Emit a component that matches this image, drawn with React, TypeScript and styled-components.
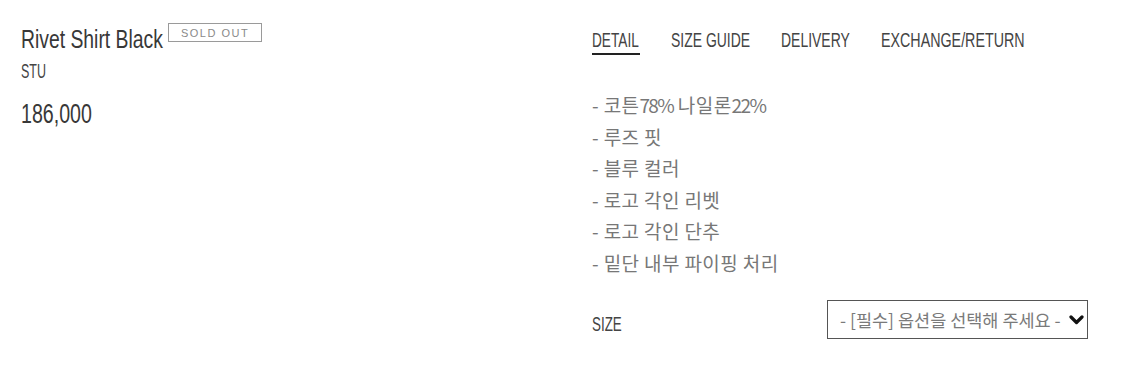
import React from "react";
import styled, { createGlobalStyle } from "styled-components";

const GlobalStyle = createGlobalStyle`
  html, body { margin: 0; padding: 0; background: #fff; }
  body { font-family: "Liberation Sans", "Noto Sans CJK KR", sans-serif; }
`;

const LATIN = `"Liberation Sans", Arial, sans-serif`;
const KOREAN = `"Noto Sans CJK KR", sans-serif`;

/* Condensed text: the reference uses a narrow display face; we squeeze Liberation Sans. */
const Squeeze = styled.span<{ $s: number }>`
  display: inline-block;
  white-space: nowrap;
  transform: scaleX(${(p) => p.$s});
  transform-origin: 0 50%;
`;

const Page = styled.div`
  display: grid;
  grid-template-columns: 592px 1fr;
  width: 1125px;
  height: 365px;
  box-sizing: border-box;
  padding-top: 24px;
`;

const Left = styled.div`
  padding-left: 21px;
`;

const TitleRow = styled.div`
  display: flex;
  align-items: flex-start;
  gap: 5px;
`;

const Title = styled.h1`
  margin: 0;
  width: 142px;
  font-family: ${LATIN};
  font-weight: 400;
  font-size: 26.5px;
  line-height: 30px;
  color: #383838;
`;

const Badge = styled.span`
  display: inline-flex;
  align-items: center;
  justify-content: center;
  box-sizing: border-box;
  width: 94px;
  height: 19px;
  margin-top: -1px;
  border: 1px solid #9a9a9a;
  font-family: ${LATIN};
  font-size: 11px;
  letter-spacing: 1.5px;
  color: #8a8a8a;
`;

const Brand = styled.div`
  width: 25px;
  font-family: ${LATIN};
  font-size: 19.5px;
  line-height: 22px;
  color: #444;
  margin-top: 6px;
`;

const Price = styled.div`
  width: 71px;
  font-family: ${LATIN};
  font-size: 28px;
  line-height: 32px;
  color: #383838;
  margin-top: 16px;
`;

const Right = styled.div`
  display: flex;
  flex-direction: column;
  padding-top: 4px;
`;

const Tabs = styled.div`
  display: flex;
  gap: 31px;
`;

const Tab = styled.span<{ $active?: boolean; $w: number }>`
  width: ${(p) => p.$w}px;
  font-family: ${LATIN};
  font-size: 21px;
  line-height: 24px;
  color: #444;
  padding-bottom: 1px;
  border-bottom: 2px solid ${(p) => (p.$active ? "#222" : "transparent")};
`;

const DetailList = styled.ul`
  list-style: none;
  margin: 34px 0 0;
  padding: 0;
`;

const DetailItem = styled.li`
  font-family: ${KOREAN};
  font-size: 19px;
  line-height: 31.5px;
  letter-spacing: 0.4px;
  color: #777;
`;

const Num = styled.span`
  letter-spacing: -1.6px;
`;

const OptionRow = styled.div`
  display: grid;
  grid-template-columns: 235px 261px;
  align-items: start;
  margin-top: 22px;
`;

const OptionLabel = styled.span`
  margin-top: 12px;
  font-family: ${LATIN};
  font-size: 20px;
  line-height: 24px;
  color: #444;
`;

const Select = styled.div`
  box-sizing: border-box;
  height: 39px;
  border: 1px solid #555;
  display: flex;
  align-items: center;
  justify-content: space-between;
  padding: 0 3px 0 12px;
  font-family: ${KOREAN};
  font-size: 17.5px;
  color: #7a7a7a;
  white-space: nowrap;
`;

const Chevron = () => (
  <svg width="15" height="12" viewBox="0 0 15 12">
    <path d="M2 3 L7.5 8.5 L13 3" fill="none" stroke="#111" strokeWidth="3.2" strokeLinecap="round" strokeLinejoin="round" />
  </svg>
);

const tabs = [
  { label: "DETAIL", w: 48, s: 0.65, active: true },
  { label: "SIZE GUIDE", w: 79, s: 0.665 },
  { label: "DELIVERY", w: 69, s: 0.665 },
  { label: "EXCHANGE/RETURN", w: 144, s: 0.68 },
];

export default function App() {
  return (
    <>
      <GlobalStyle />
      <Page>
        <Left>
          <TitleRow>
            <Title>
              <Squeeze $s={0.73}>Rivet Shirt Black</Squeeze>
            </Title>
            <Badge>SOLD OUT</Badge>
          </TitleRow>
          <Brand>
            <Squeeze $s={0.64}>STU</Squeeze>
          </Brand>
          <Price>
            <Squeeze $s={0.7}>186,000</Squeeze>
          </Price>
        </Left>
        <Right>
          <Tabs>
            {tabs.map((t) => (
              <Tab key={t.label} $w={t.w} $active={t.active}>
                <Squeeze $s={t.s}>{t.label}</Squeeze>
              </Tab>
            ))}
          </Tabs>
          <DetailList>
            <DetailItem>
              - 코튼<Num>78%</Num> 나일론<Num>22%</Num>
            </DetailItem>
            <DetailItem>- 루즈 핏</DetailItem>
            <DetailItem>- 블루 컬러</DetailItem>
            <DetailItem>- 로고 각인 리벳</DetailItem>
            <DetailItem>- 로고 각인 단추</DetailItem>
            <DetailItem>- 밑단 내부 파이핑 처리</DetailItem>
          </DetailList>
          <OptionRow>
            <OptionLabel>
              <Squeeze $s={0.67}>SIZE</Squeeze>
            </OptionLabel>
            <Select>
              <span>- [필수] 옵션을 선택해 주세요 -</span>
              <Chevron />
            </Select>
          </OptionRow>
        </Right>
      </Page>
    </>
  );
}
